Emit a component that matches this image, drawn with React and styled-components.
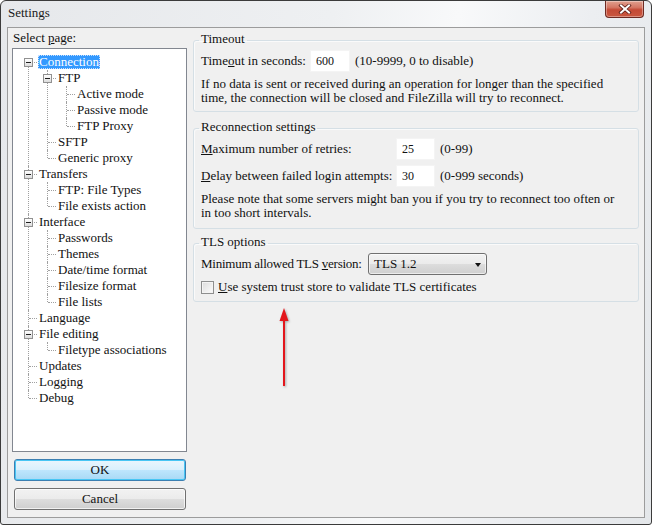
import React from 'react';
import styled, { createGlobalStyle } from 'styled-components';

const GlobalStyle = createGlobalStyle`
  html, body {
    margin: 0;
    padding: 0;
    background: #ffffff;
  }
  * {
    box-sizing: border-box;
  }
`;

const serif = `'Liberation Serif', 'Times New Roman', serif`;

// tree data, same order as the settings pages
const pages = [
  {
    label: 'Connection',
    selected: true,
    children: [
      { label: 'FTP', children: [{ label: 'Active mode' }, { label: 'Passive mode' }, { label: 'FTP Proxy' }] },
      { label: 'SFTP' },
      { label: 'Generic proxy' },
    ],
  },
  { label: 'Transfers', children: [{ label: 'FTP: File Types' }, { label: 'File exists action' }] },
  {
    label: 'Interface',
    children: [
      { label: 'Passwords' },
      { label: 'Themes' },
      { label: 'Date/time format' },
      { label: 'Filesize format' },
      { label: 'File lists' },
    ],
  },
  { label: 'Language' },
  { label: 'File editing', children: [{ label: 'Filetype associations' }] },
  { label: 'Updates' },
  { label: 'Logging' },
  { label: 'Debug' },
];

const App = () => {
  return (
    <>
      <GlobalStyle />
      <Window>
        <TitleBar>
          <Title>Settings</Title>
          <CloseButton aria-label="Close">
            <svg width="14" height="10" viewBox="0 0 14 10">
              <path d="M3 1.5 L11 8.5 M11 1.5 L3 8.5" stroke="#5a1d16" strokeWidth="3.6" strokeLinecap="square" />
              <path d="M3 1.5 L11 8.5 M11 1.5 L3 8.5" stroke="#ffffff" strokeWidth="2" strokeLinecap="square" />
            </svg>
          </CloseButton>
        </TitleBar>

        <Client>
          <LeftPane>
            <PaneLabel>
              Select <u>p</u>age:
            </PaneLabel>
            <TreeBox>
              <Branch>
                {pages.map((p, i) => (
                  <TreeNode key={p.label} node={p} first={i === 0} last={i === pages.length - 1} root />
                ))}
              </Branch>
            </TreeBox>
            <DialogButton $default>OK</DialogButton>
            <DialogButton>Cancel</DialogButton>
          </LeftPane>

          <RightPane>
            <Group $pad="2px 7px 6px">
              <Caption>Timeout</Caption>
              <Row>
                <FieldLabel $w={109}>
                  Time<u>o</u>ut in seconds:
                </FieldLabel>
                <NumberBox $w={40} defaultValue="600" />
                <Hint>(10-9999, 0 to disable)</Hint>
              </Row>
              <Note>
                If no data is sent or received during an operation for longer than the specified
                <br />
                time, the connection will be closed and FileZilla will try to reconnect.
              </Note>
            </Group>

            <Group $gap={8} $pad="2px 7px 8px">
              <Caption>Reconnection settings</Caption>
              <Row>
                <FieldLabel $w={195}>
                  <u>M</u>aximum number of retries:
                </FieldLabel>
                <NumberBox $w={39} defaultValue="25" />
                <Hint>(0-99)</Hint>
              </Row>
              <Row $gap={5}>
                <FieldLabel $w={195}>
                  <u>D</u>elay between failed login attempts:
                </FieldLabel>
                <NumberBox $w={39} defaultValue="30" />
                <Hint>(0-999 seconds)</Hint>
              </Row>
              <Note>
                Please note that some servers might ban you if you try to reconnect too often or
                <br />
                in too short intervals.
              </Note>
            </Group>

            <Group $gap={6} $pad="2px 7px 7px">
              <Caption>TLS options</Caption>
              <Row>
                <FieldLabel $w={167} $tight>
                  Minimum allowed TLS <u>v</u>ersion:
                </FieldLabel>
                <Combo>
                  <span>TLS 1.2</span>
                  <ComboArrow />
                </Combo>
              </Row>
              <CheckRow>
                <CheckBox />
                <span>
                  <u>U</u>se system trust store to validate TLS certificates
                </span>
              </CheckRow>
            </Group>

            <Annotation width="20" height="90" viewBox="0 0 20 90">
              <path d="M10 13 L10 79" stroke="#e3161c" strokeWidth="2" />
              <path d="M5.5 14 L10 1 L14.5 14 Z" fill="#e3161c" />
            </Annotation>
          </RightPane>
        </Client>
      </Window>
    </>
  );
};

const TreeNode = ({ node, first, last, root }) => {
  const hasKids = node.children && node.children.length > 0;
  return (
    <Item $first={first && root} $last={last}>
      <NodeRow>
        {hasKids && <Expander />}
        <NodeText $selected={node.selected}>{node.label}</NodeText>
      </NodeRow>
      {hasKids && (
        <Branch $nested>
          {node.children.map((c, i) => (
            <TreeNode key={c.label} node={c} last={i === node.children.length - 1} />
          ))}
        </Branch>
      )}
    </Item>
  );
};

const Window = styled.div`
  width: 652px;
  height: 525px;
  display: flex;
  flex-direction: column;
  padding: 0 6px 6px;
  border: 1px solid #3b3b3b;
  border-radius: 6px 6px 3px 3px;
  background: linear-gradient(100deg, #e6e8eb 0%, #eef0f2 45%, #f8f9fa 62%, #eceef1 80%, #e4e7ea 100%);
  font-family: ${serif};
  font-size: 13px;
  color: #111111;
  overflow: hidden;
`;

const TitleBar = styled.div`
  height: 26px;
  display: flex;
  align-items: flex-start;
  padding-left: 1px;
`;

const Title = styled.div`
  line-height: 24px;
  font-size: 13px;
  color: #1a1a1a;
`;

const CloseButton = styled.div`
  margin-left: auto;
  margin-right: 1px;
  width: 39px;
  height: 17px;
  display: flex;
  align-items: center;
  justify-content: center;
  border: 1px solid #6e2a22;
  border-top: none;
  border-radius: 0 0 4px 4px;
  background: linear-gradient(#e0a08f 0%, #d47764 40%, #c44a36 55%, #c9573f 100%);
  box-shadow: inset 0 0 0 1px rgba(255, 255, 255, 0.35);
`;

const Client = styled.div`
  flex: 1;
  display: flex;
  gap: 6px;
  padding: 3px 5px 7px 4px;
  border: 1px solid #9c9c9c;
  background: #f0f0f0;
`;

const LeftPane = styled.div`
  width: 175px;
  display: flex;
  flex-direction: column;
`;

const PaneLabel = styled.div`
  line-height: 14px;
  padding-left: 1px;
`;

const TreeBox = styled.div`
  flex: 1;
  margin-top: 3px;
  padding-top: 5px;
  border: 1px solid #828790;
  background: #ffffff;
  overflow: hidden;
`;

const Branch = styled.ul`
  list-style: none;
  margin: 0 0 0 ${(p) => (p.$nested ? 19 : 0)}px;
  padding: 0;
`;

const Item = styled.li`
  position: relative;

  &::before {
    content: '';
    position: absolute;
    left: 15px;
    top: ${(p) => (p.$first ? 8 : 0)}px;
    ${(p) => (p.$last ? 'height: 8px;' : 'bottom: 0;')}
    border-left: 1px dotted #a0a0a0;
  }

  &::after {
    content: '';
    position: absolute;
    left: 16px;
    top: 8px;
    width: 8px;
    border-top: 1px dotted #a0a0a0;
  }
`;

const NodeRow = styled.div`
  height: 16px;
  display: flex;
  align-items: center;
  padding-left: 25px;
`;

const Expander = styled.span`
  position: absolute;
  z-index: 1;
  left: 11px;
  top: 4px;
  width: 9px;
  height: 9px;
  border: 1px solid #919191;
  background: linear-gradient(#ffffff, #dcdcdc);

  &::after {
    content: '';
    position: absolute;
    left: 1px;
    top: 3px;
    width: 5px;
    height: 1px;
    background: #1e1e1e;
  }
`;

const NodeText = styled.span`
  line-height: 14px;
  padding: 0 1px;
  white-space: nowrap;
  color: ${(p) => (p.$selected ? '#ffffff' : '#111111')};
  background: ${(p) => (p.$selected ? '#3399ff' : 'transparent')};
  outline: ${(p) => (p.$selected ? '1px dotted #c8e0ff' : 'none')};
  outline-offset: -1px;
`;

const DialogButton = styled.button`
  width: 172px;
  height: 22px;
  margin: 7px 0 0 2px;
  padding: 0;
  font-family: ${serif};
  font-size: 13px;
  color: #111111;
  border: 1px solid ${(p) => (p.$default ? '#3c7fb1' : '#707070')};
  border-radius: 3px;
  background: ${(p) =>
    p.$default
      ? 'linear-gradient(#eaf6fd 0%, #d9f0fc 50%, #bee6fd 51%, #a7d9f5 100%)'
      : 'linear-gradient(#f2f2f2 0%, #ebebeb 50%, #dddddd 51%, #cfcfcf 100%)'};
  box-shadow: inset 0 0 0 1px ${(p) => (p.$default ? '#48c6f4' : 'rgba(255,255,255,0.7)')};
`;

const RightPane = styled.div`
  position: relative;
  flex: 1;
  padding-top: 1px;
`;

const Group = styled.fieldset`
  margin: ${(p) => p.$gap || 0}px 0 0;
  padding: ${(p) => p.$pad};
  min-width: 0;
  border: 1px solid #d5dfe5;
  border-radius: 3px;
  box-shadow: inset 1px 1px 0 #fafafa;
`;

const Caption = styled.legend`
  margin-left: -2px;
  padding: 0 2px 2px;
  line-height: 14px;
`;

const Row = styled.div`
  height: 22px;
  margin-top: ${(p) => p.$gap || 0}px;
  display: flex;
  align-items: center;
`;

const FieldLabel = styled.span`
  width: ${(p) => p.$w}px;
  flex-shrink: 0;
  white-space: nowrap;
  letter-spacing: ${(p) => (p.$tight ? '-0.25px' : 'normal')};
`;

const NumberBox = styled.input`
  width: ${(p) => p.$w}px;
  height: 22px;
  padding: 0 0 0 5px;
  border: 1px solid #f4f4f4;
  background: #ffffff;
  font-family: ${serif};
  font-size: 12px;
  color: #111111;
  outline: none;
`;

const Hint = styled.span`
  margin-left: 5px;
  white-space: nowrap;
`;

const Note = styled.p`
  margin: 5px 0 0;
  line-height: 14px;
  white-space: nowrap;
`;

const Combo = styled.div`
  width: 119px;
  height: 22px;
  display: flex;
  align-items: center;
  justify-content: space-between;
  padding: 0 5px 0 5px;
  border: 1px solid #707070;
  border-radius: 3px;
  background: linear-gradient(#f2f2f2 0%, #ebebeb 50%, #dddddd 51%, #cfcfcf 100%);
  box-shadow: inset 0 0 0 1px rgba(255, 255, 255, 0.6);
`;

const ComboArrow = styled.span`
  width: 0;
  height: 0;
  margin-top: 1px;
  border-left: 3.5px solid transparent;
  border-right: 3.5px solid transparent;
  border-top: 4px solid #111111;
`;

const CheckRow = styled.label`
  margin-top: 5px;
  height: 14px;
  display: flex;
  align-items: center;
  gap: 4px;
  line-height: 14px;
`;

const CheckBox = styled.span`
  width: 13px;
  height: 13px;
  margin-left: 0;
  border: 1px solid #8e8f8f;
  background: linear-gradient(135deg, #dcdcdc, #fdfdfd);
  box-shadow: inset 0 0 0 1px #f4f4f4;
`;

const Annotation = styled.svg`
  position: absolute;
  left: 81px;
  top: 276px;
  filter: drop-shadow(1.5px 1px 1px rgba(0, 0, 0, 0.3));
`;

export default App;
